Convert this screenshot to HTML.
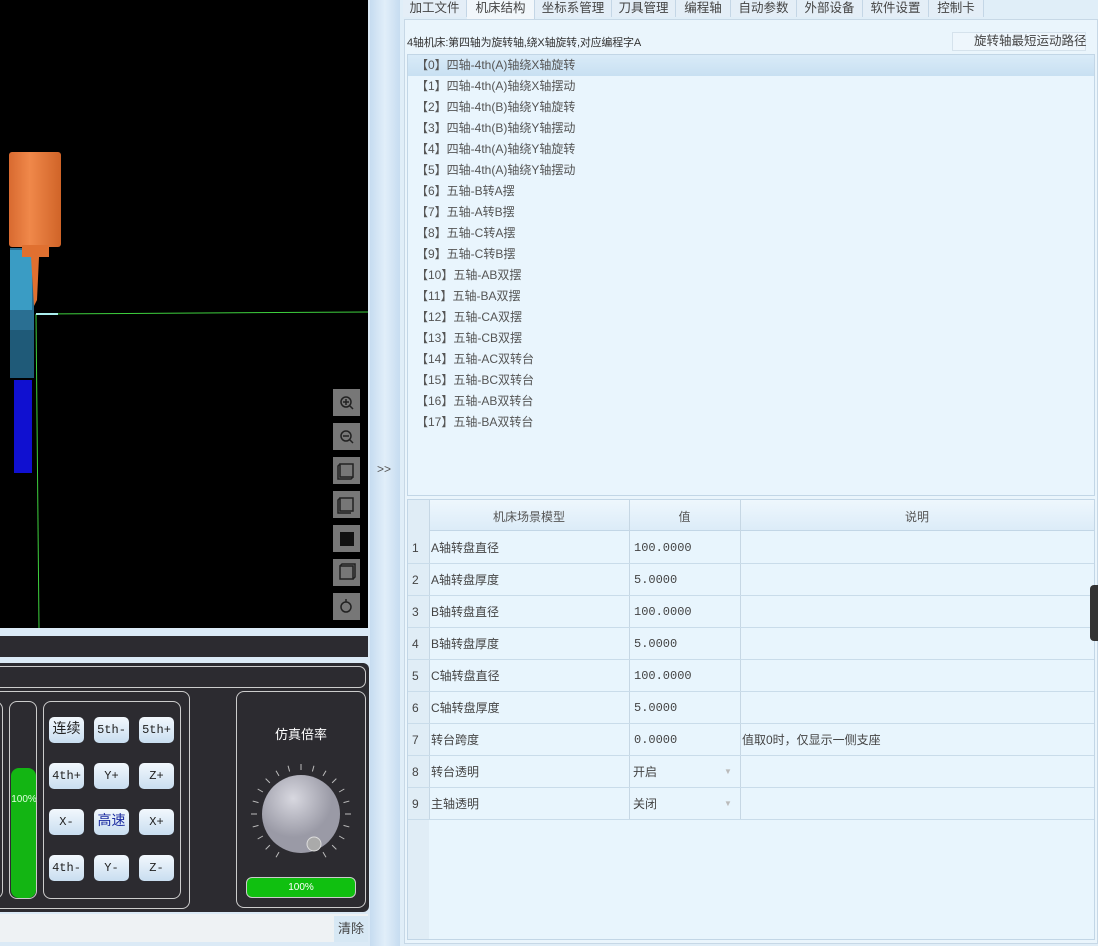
<!DOCTYPE html>
<html><head><meta charset="utf-8"><style>
*{margin:0;padding:0;box-sizing:border-box}
body{width:1098px;height:946px;position:relative;overflow:hidden;background:#dbeaf6;font-family:"Liberation Sans","Noto Sans CJK SC",sans-serif;font-size:12px;color:#333}
.a{position:absolute}
.btn{position:absolute;width:35px;height:26px;border-radius:5px;background:linear-gradient(#f2f8fd,#c9def0);font-family:"Liberation Mono","Noto Sans CJK SC",monospace;font-size:12px;color:#222;text-align:center;line-height:26px}
.tab{position:absolute;top:0;height:17px;line-height:16px;font-size:12.5px;color:#444;border-right:1px solid #c4d6e6;text-align:center;background:#e4eef7}
.li{position:absolute;left:410px;height:21px;line-height:21px;font-size:12px;color:#555;width:683px;padding-left:6px}
.row{position:absolute;left:408px;width:686px;height:32px;border-bottom:1px solid #c9dcea}
.row span{position:absolute;top:0;line-height:32px;font-size:12px;color:#444}
.m{font-family:'Liberation Mono',monospace;font-size:11px}
</style></head><body>
<div class="a" style="left:0;top:0;width:368px;height:628px;background:#000"></div>
<svg class="a" style="left:0;top:0" width="368" height="628">
<defs><linearGradient id="o" x1="0" x2="1"><stop offset="0" stop-color="#d86a30"/><stop offset=".4" stop-color="#f0884a"/><stop offset="1" stop-color="#d06428"/></linearGradient></defs>
<rect x="9" y="152" width="52" height="95" rx="3" fill="url(#o)"/>
<rect x="10" y="248" width="24" height="130" fill="#2a6f92"/>
<rect x="10" y="250" width="22" height="60" fill="#3a9cc4"/>
<rect x="10" y="330" width="24" height="48" fill="#1f5a78"/>
<rect x="22" y="245" width="27" height="12" fill="#e07030"/>
<rect x="14" y="380" width="18" height="93" fill="#1010d0"/>
<polygon points="31,257 39,257 37,300 34,306" fill="#e07030"/>
<line x1="36" y1="314" x2="368" y2="312" stroke="#3ed03e" stroke-width="1"/>
<line x1="36" y1="314" x2="39" y2="628" stroke="#3ed03e" stroke-width="1"/>
<line x1="36" y1="314" x2="58" y2="314" stroke="#aee" stroke-width="2"/>
<g fill="#777">
<rect x="333" y="389" width="27" height="27"/><rect x="333" y="423" width="27" height="27"/>
<rect x="333" y="457" width="27" height="27"/><rect x="333" y="491" width="27" height="27"/>
<rect x="333" y="525" width="27" height="27"/><rect x="333" y="559" width="27" height="27"/>
<rect x="333" y="593" width="27" height="27"/></g>
<g fill="none" stroke="#222" stroke-width="1.5">
<circle cx="346" cy="402" r="5"/><line x1="350" y1="406" x2="353" y2="409"/><line x1="343" y1="402" x2="349" y2="402"/><line x1="346" y1="399" x2="346" y2="405"/>
<circle cx="346" cy="436" r="5"/><line x1="350" y1="440" x2="353" y2="443"/><line x1="343" y1="436" x2="349" y2="436"/>
<rect x="340" y="464" width="13" height="13"/><path d="M340 464l-2 2v13h13l2-2"/>
<rect x="340" y="498" width="13" height="13"/><path d="M340 498l-2 2v13h13"/>
<rect x="340" y="566" width="13" height="13"/><path d="M340 566l2-2h13v13l-2 2"/>
<circle cx="346" cy="607" r="5"/><line x1="346" y1="599" x2="346" y2="602"/>
</g><rect x="340" y="532" width="14" height="14" fill="#111"/>
</svg>
<div class="a" style="left:0;top:636px;width:368px;height:21px;background:#2c2b30"></div>
<div class="a" style="left:0;top:663px;width:369px;height:249px;background:#2c2b30;border-radius:0 6px 6px 0"></div>
<div class="a" style="left:-10px;top:666px;width:376px;height:22px;border:1px solid #ccc;border-radius:7px"></div>
<div class="a" style="left:-10px;top:691px;width:200px;height:218px;border:1px solid #ccc;border-radius:8px"></div>
<div class="a" style="left:-20px;top:701px;width:23px;height:198px;border:1px solid #ccc;border-radius:8px"></div>
<div class="a" style="left:9px;top:701px;width:28px;height:198px;border:1px solid #ccc;border-radius:8px;overflow:hidden"><div class="a" style="left:1px;top:66px;width:25px;height:130px;background:#13b513;border-radius:8px"></div><div class="a" style="left:0;top:92px;width:28px;text-align:center;color:#dfd;font-size:10px">100%</div></div>
<div class="a" style="left:43px;top:701px;width:138px;height:198px;border:1px solid #ccc;border-radius:8px"></div>
<div class="btn" style="left:49px;top:717px;font-size:14px">连续</div><div class="btn" style="left:94px;top:717px">5th-</div><div class="btn" style="left:139px;top:717px">5th+</div>
<div class="btn" style="left:49px;top:763px">4th+</div><div class="btn" style="left:94px;top:763px">Y+</div><div class="btn" style="left:139px;top:763px">Z+</div>
<div class="btn" style="left:49px;top:809px">X-</div><div class="btn" style="left:94px;top:809px;color:#1a2aa0;font-size:14px">高速</div><div class="btn" style="left:139px;top:809px">X+</div>
<div class="btn" style="left:49px;top:855px">4th-</div><div class="btn" style="left:94px;top:855px">Y-</div><div class="btn" style="left:139px;top:855px">Z-</div>
<div class="a" style="left:236px;top:691px;width:130px;height:217px;border:1px solid #ccc;border-radius:8px"></div>
<div class="a" style="left:236px;top:724px;width:130px;text-align:center;color:#fff;font-size:13px">仿真倍率</div>
<svg class="a" style="left:246px;top:760px" width="110" height="110">
<g stroke="#bbb" stroke-width="1" transform="translate(55 54)">
<line x1="0" y1="-50" x2="0" y2="-44" transform="rotate(-150)"/><line x1="0" y1="-50" x2="0" y2="-44" transform="rotate(-135)"/><line x1="0" y1="-50" x2="0" y2="-44" transform="rotate(-120)"/><line x1="0" y1="-50" x2="0" y2="-44" transform="rotate(-105)"/><line x1="0" y1="-50" x2="0" y2="-44" transform="rotate(-90)"/><line x1="0" y1="-50" x2="0" y2="-44" transform="rotate(-75)"/><line x1="0" y1="-50" x2="0" y2="-44" transform="rotate(-60)"/><line x1="0" y1="-50" x2="0" y2="-44" transform="rotate(-45)"/><line x1="0" y1="-50" x2="0" y2="-44" transform="rotate(-30)"/><line x1="0" y1="-50" x2="0" y2="-44" transform="rotate(-15)"/><line x1="0" y1="-50" x2="0" y2="-44"/><line x1="0" y1="-50" x2="0" y2="-44" transform="rotate(15)"/><line x1="0" y1="-50" x2="0" y2="-44" transform="rotate(30)"/><line x1="0" y1="-50" x2="0" y2="-44" transform="rotate(45)"/><line x1="0" y1="-50" x2="0" y2="-44" transform="rotate(60)"/><line x1="0" y1="-50" x2="0" y2="-44" transform="rotate(75)"/><line x1="0" y1="-50" x2="0" y2="-44" transform="rotate(90)"/><line x1="0" y1="-50" x2="0" y2="-44" transform="rotate(105)"/><line x1="0" y1="-50" x2="0" y2="-44" transform="rotate(120)"/><line x1="0" y1="-50" x2="0" y2="-44" transform="rotate(135)"/><line x1="0" y1="-50" x2="0" y2="-44" transform="rotate(150)"/></g>
<defs><radialGradient id="g" cx="40%" cy="30%"><stop offset="0" stop-color="#d8d8e0"/><stop offset="1" stop-color="#9a9aa6"/></radialGradient></defs>
<circle cx="55" cy="54" r="39" fill="url(#g)"/><circle cx="68" cy="84" r="7" fill="#aaa" stroke="#ddd"/>
</svg>
<div class="a" style="left:246px;top:877px;width:110px;height:21px;background:#10c010;border:1px solid #ccc;border-radius:6px;color:#fff;font-size:10px;text-align:center;line-height:19px">100%</div>
<div class="a" style="left:0;top:914px;width:368px;height:28px;background:#eef2f4"></div>
<div class="a" style="left:334px;top:916px;width:34px;height:26px;background:#d7e8f4;color:#444;font-size:13px;line-height:26px;text-align:center">清除</div>
<div class="a" style="left:370px;top:0;width:30px;height:946px;background:linear-gradient(90deg,#c6dcf0,#e1eef9,#c6dcf0)"></div>
<div class="a" style="left:377px;top:462px;font-size:12px;color:#555">&gt;&gt;</div>
<div class="a" style="left:400px;top:0;width:698px;height:946px;background:#e0eef8"></div>
<div class="tab" style="left:403px;width:64px">加工文件</div>
<div class="tab" style="left:467px;width:68px;background:#f2f7fb;height:19px">机床结构</div>
<div class="tab" style="left:535px;width:77px">坐标系管理</div>
<div class="tab" style="left:612px;width:64px">刀具管理</div>
<div class="tab" style="left:676px;width:55px">编程轴</div>
<div class="tab" style="left:731px;width:66px">自动参数</div>
<div class="tab" style="left:797px;width:66px">外部设备</div>
<div class="tab" style="left:863px;width:66px">软件设置</div>
<div class="tab" style="left:929px;width:55px">控制卡</div>
<div class="a" style="left:404px;top:19px;width:694px;height:925px;background:#eaf5fc;border:1px solid #c7d8e6"></div>
<div class="a" style="left:407px;top:34px;font-size:11px;color:#333;letter-spacing:-0.2px">4轴机床:第四轴为旋转轴,绕X轴旋转,对应编程字A</div>
<div class="a" style="left:952px;top:32px;width:134px;height:19px;background:#eef6fc;border:1px solid #d5e2ec"></div>
<div class="a" style="left:974px;top:32px;font-size:12.5px;line-height:19px;color:#444">旋转轴最短运动路径</div>
<div class="a" style="left:407px;top:54px;width:688px;height:442px;background:#e9f5fd;border:1px solid #c2d6e6"></div>
<div class="a" style="left:408px;top:55px;width:686px;height:21px;background:linear-gradient(#d9ebf8,#c8e0f2)"></div>
<div class="li" style="top:55px">【0】四轴-4th(A)轴绕X轴旋转</div>
<div class="li" style="top:76px">【1】四轴-4th(A)轴绕X轴摆动</div>
<div class="li" style="top:97px">【2】四轴-4th(B)轴绕Y轴旋转</div>
<div class="li" style="top:118px">【3】四轴-4th(B)轴绕Y轴摆动</div>
<div class="li" style="top:139px">【4】四轴-4th(A)轴绕Y轴旋转</div>
<div class="li" style="top:160px">【5】四轴-4th(A)轴绕Y轴摆动</div>
<div class="li" style="top:181px">【6】五轴-B转A摆</div>
<div class="li" style="top:202px">【7】五轴-A转B摆</div>
<div class="li" style="top:223px">【8】五轴-C转A摆</div>
<div class="li" style="top:244px">【9】五轴-C转B摆</div>
<div class="li" style="top:265px">【10】五轴-AB双摆</div>
<div class="li" style="top:286px">【11】五轴-BA双摆</div>
<div class="li" style="top:307px">【12】五轴-CA双摆</div>
<div class="li" style="top:328px">【13】五轴-CB双摆</div>
<div class="li" style="top:349px">【14】五轴-AC双转台</div>
<div class="li" style="top:370px">【15】五轴-BC双转台</div>
<div class="li" style="top:391px">【16】五轴-AB双转台</div>
<div class="li" style="top:412px">【17】五轴-BA双转台</div>
<div class="a" style="left:407px;top:499px;width:688px;height:441px;background:#e8f5fd;border:1px solid #c2d6e6"></div>
<div class="a" style="left:408px;top:500px;width:686px;height:31px;background:linear-gradient(#eef7fd,#dcecf8);border-bottom:1px solid #c2d6e6"></div>
<div class="a" style="left:408px;top:500px;width:21px;height:439px;background:#e0edf6"></div>
<div class="a" style="left:429px;top:500px;width:1px;height:320px;background:#c6d7e4"></div>
<div class="a" style="left:629px;top:500px;width:1px;height:320px;background:#c6d7e4"></div>
<div class="a" style="left:740px;top:500px;width:1px;height:320px;background:#c6d7e4"></div>
<div class="a" style="left:429px;top:508px;width:200px;text-align:center;color:#555">机床场景模型</div>
<div class="a" style="left:629px;top:508px;width:111px;text-align:center;color:#555">值</div>
<div class="a" style="left:740px;top:508px;width:354px;text-align:center;color:#555">说明</div>
<div class="row" style="top:532px"><span style="left:4px">1</span><span style="left:23px">A轴转盘直径</span><span class="m" style="left:226px">100.0000</span></div>
<div class="row" style="top:564px"><span style="left:4px">2</span><span style="left:23px">A轴转盘厚度</span><span class="m" style="left:226px">5.0000</span></div>
<div class="row" style="top:596px"><span style="left:4px">3</span><span style="left:23px">B轴转盘直径</span><span class="m" style="left:226px">100.0000</span></div>
<div class="row" style="top:628px"><span style="left:4px">4</span><span style="left:23px">B轴转盘厚度</span><span class="m" style="left:226px">5.0000</span></div>
<div class="row" style="top:660px"><span style="left:4px">5</span><span style="left:23px">C轴转盘直径</span><span class="m" style="left:226px">100.0000</span></div>
<div class="row" style="top:692px"><span style="left:4px">6</span><span style="left:23px">C轴转盘厚度</span><span class="m" style="left:226px">5.0000</span></div>
<div class="row" style="top:724px"><span style="left:4px">7</span><span style="left:23px">转台跨度</span><span class="m" style="left:226px">0.0000</span><span style="left:334px">值取0时，仅显示一侧支座</span></div>
<div class="row" style="top:756px"><span style="left:4px">8</span><span style="left:23px">转台透明</span><span style="left:225px">开启</span><span style="left:316px;color:#bbb;font-size:8px">▼</span></div>
<div class="row" style="top:788px"><span style="left:4px">9</span><span style="left:23px">主轴透明</span><span style="left:225px">关闭</span><span style="left:316px;color:#bbb;font-size:8px">▼</span></div>
<div class="a" style="left:1090px;top:585px;width:8px;height:56px;background:#333;border-radius:4px 0 0 4px"></div>
</body></html>
